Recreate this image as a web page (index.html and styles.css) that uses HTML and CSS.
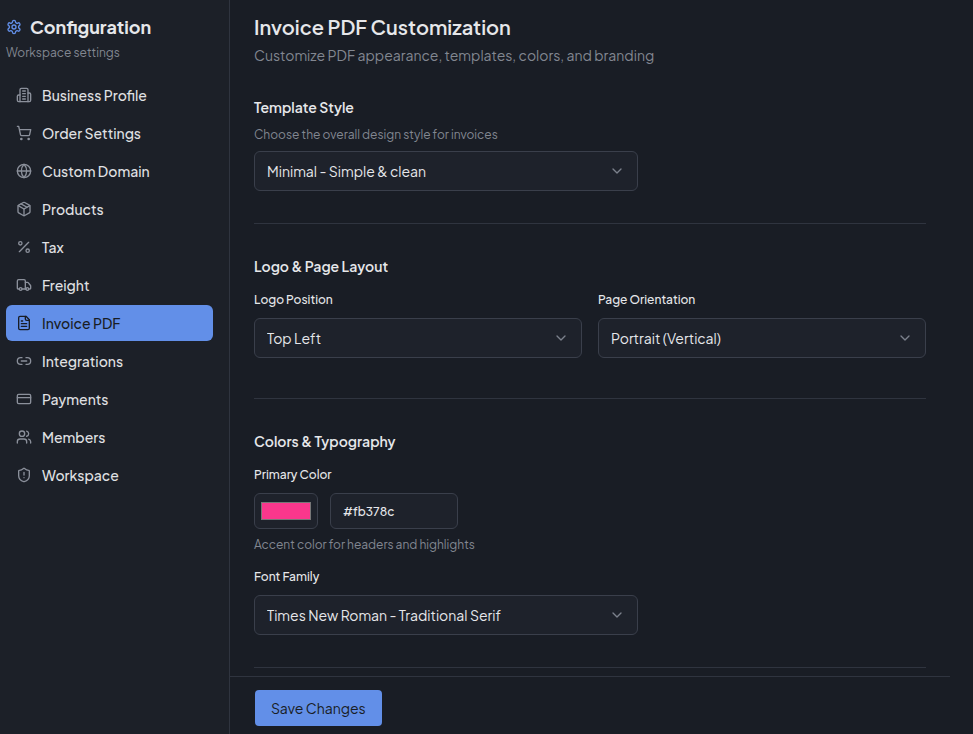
FILE: index.html
```html
<!DOCTYPE html>
<html lang="en">
<head>
    <meta charset="UTF-8">
    <meta name="viewport" content="width=device-width, initial-scale=1.0">
    <title>Invoice PDF Customization</title>
    <link rel="stylesheet" href="styles.css">
</head>
<body>
    <aside class="sidebar">
        <div class="sidebar-title">
            <svg class="icon" viewBox="0 0 24 24"><path d="M12.22 2h-.44a2 2 0 0 0-2 2v.18a2 2 0 0 1-1 1.73l-.43.25a2 2 0 0 1-2 0l-.15-.08a2 2 0 0 0-2.73.73l-.22.38a2 2 0 0 0 .73 2.73l.15.1a2 2 0 0 1 1 1.72v.51a2 2 0 0 1-1 1.74l-.15.09a2 2 0 0 0-.73 2.73l.22.38a2 2 0 0 0 2.73.73l.15-.08a2 2 0 0 1 2 0l.43.25a2 2 0 0 1 1 1.73V20a2 2 0 0 0 2 2h.44a2 2 0 0 0 2-2v-.18a2 2 0 0 1 1-1.73l.43-.25a2 2 0 0 1 2 0l.15.08a2 2 0 0 0 2.73-.73l.22-.39a2 2 0 0 0-.73-2.73l-.15-.08a2 2 0 0 1-1-1.74v-.5a2 2 0 0 1 1-1.74l.15-.09a2 2 0 0 0 .73-2.73l-.22-.38a2 2 0 0 0-2.73-.73l-.15.08a2 2 0 0 1-2 0l-.43-.25a2 2 0 0 1-1-1.73V4a2 2 0 0 0-2-2z"/><circle cx="12" cy="12" r="3"/></svg>
            <h2>Configuration</h2>
        </div>
        <p class="sidebar-subtitle">Workspace settings</p>
        <nav>
            <a href="#business">
                <svg class="icon" viewBox="0 0 24 24"><path d="M6 22V4a2 2 0 0 1 2-2h8a2 2 0 0 1 2 2v18Z"/><path d="M6 12H4a2 2 0 0 0-2 2v6a2 2 0 0 0 2 2h2"/><path d="M18 9h2a2 2 0 0 1 2 2v9a2 2 0 0 1-2 2h-2"/><path d="M10 6h4M10 10h4M10 14h4M10 18h4"/></svg>
                Business Profile
            </a>
            <a href="#orders">
                <svg class="icon" viewBox="0 0 24 24"><circle cx="8" cy="21" r="1"/><circle cx="19" cy="21" r="1"/><path d="M2.05 2.05h2l2.66 12.42a2 2 0 0 0 2 1.58h9.78a2 2 0 0 0 1.95-1.57l1.65-7.43H5.12"/></svg>
                Order Settings
            </a>
            <a href="#domain">
                <svg class="icon" viewBox="0 0 24 24"><circle cx="12" cy="12" r="10"/><path d="M12 2a14.5 14.5 0 0 0 0 20 14.5 14.5 0 0 0 0-20"/><path d="M2 12h20"/></svg>
                Custom Domain
            </a>
            <a href="#products">
                <svg class="icon" viewBox="0 0 24 24"><path d="M11 21.73a2 2 0 0 0 2 0l7-4A2 2 0 0 0 21 16V8a2 2 0 0 0-1-1.73l-7-4a2 2 0 0 0-2 0l-7 4A2 2 0 0 0 3 8v8a2 2 0 0 0 1 1.73z"/><path d="M12 22V12"/><path d="M3.3 7 12 12l8.7-5"/><path d="m7.5 4.27 9 5.15"/></svg>
                Products
            </a>
            <a href="#tax">
                <svg class="icon" viewBox="0 0 24 24"><path d="M19 5 5 19"/><circle cx="6.5" cy="6.5" r="2.5"/><circle cx="17.5" cy="17.5" r="2.5"/></svg>
                Tax
            </a>
            <a href="#freight">
                <svg class="icon" viewBox="0 0 24 24"><path d="M14 18V6a2 2 0 0 0-2-2H4a2 2 0 0 0-2 2v11a1 1 0 0 0 1 1h2"/><path d="M15 18H9"/><path d="M19 18h2a1 1 0 0 0 1-1v-3.65a1 1 0 0 0-.22-.62l-3.48-4.35A1 1 0 0 0 17.52 8H14"/><circle cx="17" cy="18" r="2"/><circle cx="7" cy="18" r="2"/></svg>
                Freight
            </a>
            <a href="#invoice" class="active">
                <svg class="icon" viewBox="0 0 24 24"><path d="M15 2H6a2 2 0 0 0-2 2v16a2 2 0 0 0 2 2h12a2 2 0 0 0 2-2V7Z"/><path d="M14 2v4a2 2 0 0 0 2 2h4"/><path d="M10 9H8M16 13H8M16 17H8"/></svg>
                Invoice PDF
            </a>
            <a href="#integrations">
                <svg class="icon" viewBox="0 0 24 24"><path d="M9 17H7A5 5 0 0 1 7 7h2"/><path d="M15 7h2a5 5 0 1 1 0 10h-2"/><path d="M8 12h8"/></svg>
                Integrations
            </a>
            <a href="#payments">
                <svg class="icon" viewBox="0 0 24 24"><rect x="2" y="5" width="20" height="14" rx="2"/><path d="M2 10h20"/></svg>
                Payments
            </a>
            <a href="#members">
                <svg class="icon" viewBox="0 0 24 24"><path d="M16 21v-2a4 4 0 0 0-4-4H6a4 4 0 0 0-4 4v2"/><circle cx="9" cy="7" r="4"/><path d="M22 21v-2a4 4 0 0 0-3-3.87"/><path d="M16 3.13a4 4 0 0 1 0 7.75"/></svg>
                Members
            </a>
            <a href="#workspace">
                <svg class="icon" viewBox="0 0 24 24"><path d="M20 13c0 5-3.5 7.5-7.66 8.95a1 1 0 0 1-.67-.01C7.5 20.5 4 18 4 13V6a1 1 0 0 1 1-1c2 0 4.5-1.2 6.24-2.72a1.17 1.17 0 0 1 1.52 0C14.51 3.81 17 5 19 5a1 1 0 0 1 1 1z"/><path d="M12 8v4M12 16h.01"/></svg>
                Workspace
            </a>
        </nav>
    </aside>

    <main>
        <form class="settings">
            <header>
                <h1>Invoice PDF Customization</h1>
                <p>Customize PDF appearance, templates, colors, and branding</p>
            </header>

            <section>
                <h3><label for="template">Template Style</label></h3>
                <p class="hint">Choose the overall design style for invoices</p>
                <div class="select narrow">
                    <select id="template">
                        <option>Minimal - Simple &amp; clean</option>
                    </select>
                    <svg class="icon" viewBox="0 0 24 24"><path d="m6 9 6 6 6-6"/></svg>
                </div>
            </section>

            <section class="layout">
                <h3>Logo &amp; Page Layout</h3>
                <div class="columns">
                    <div class="field">
                        <label for="logo_position">Logo Position</label>
                        <div class="select">
                            <select id="logo_position">
                                <option>Top Left</option>
                            </select>
                            <svg class="icon" viewBox="0 0 24 24"><path d="m6 9 6 6 6-6"/></svg>
                        </div>
                    </div>
                    <div class="field">
                        <label for="orientation">Page Orientation</label>
                        <div class="select">
                            <select id="orientation">
                                <option>Portrait (Vertical)</option>
                            </select>
                            <svg class="icon" viewBox="0 0 24 24"><path d="m6 9 6 6 6-6"/></svg>
                        </div>
                    </div>
                </div>
            </section>

            <section>
                <h3>Colors &amp; Typography</h3>
                <div class="field">
                    <label for="color_text">Primary Color</label>
                    <div class="color-row">
                        <input type="color" id="color_picker" aria-label="Pick primary color" value="#fb378c">
                        <input type="text" id="color_text" value="#fb378c">
                    </div>
                    <p class="hint">Accent color for headers and highlights</p>
                </div>
                <div class="field">
                    <label for="font_family">Font Family</label>
                    <div class="select narrow">
                        <select id="font_family">
                            <option>Times New Roman - Traditional Serif</option>
                        </select>
                        <svg class="icon" viewBox="0 0 24 24"><path d="m6 9 6 6 6-6"/></svg>
                    </div>
                </div>
            </section>
        </form>

        <footer>
            <button type="button">Save Changes</button>
        </footer>
    </main>
</body>
</html>
```

FILE: styles.css
```css
* {
    box-sizing: border-box;
}
body {
    display: flex;
    margin: 0;
    min-height: 100vh;
    font-family: "Plus Jakarta Sans", Inter, sans-serif;
    font-size: 14px;
    line-height: 20px;
    background-color: #191d25;
    color: #e6e7ea;
}
h1, h2, h3, p {
    margin: 0;
}
.icon {
    flex: none;
    width: 16px;
    height: 16px;
    fill: none;
    stroke: #8b909b;
    stroke-width: 2;
    stroke-linecap: round;
    stroke-linejoin: round;
}

/* Sidebar */
.sidebar {
    flex: none;
    width: 230px;
    padding: 13px 16px 13px 6px;
    background-color: #1c2028;
    border-right: 1px solid #2f343f;
}
.sidebar-title {
    display: flex;
    align-items: center;
    gap: 8px;
}
.sidebar-title .icon {
    stroke: #628fe8;
}
.sidebar-title h2 {
    font-size: 18px;
    line-height: 28px;
    font-weight: 700;
}
.sidebar-subtitle {
    margin-top: 2px;
    font-size: 12px;
    line-height: 20px;
    color: #828791;
}
nav {
    display: flex;
    flex-direction: column;
    gap: 2px;
    margin-top: 14px;
}
nav a {
    display: flex;
    align-items: center;
    gap: 10px;
    height: 36px;
    padding: 0 10px;
    border-radius: 6px;
    font-weight: 500;
    color: #e0e1e4;
    text-decoration: none;
}
nav a.active {
    background-color: #628fe8;
    color: #191d25;
}
nav a.active .icon {
    stroke: #191d25;
}

/* Settings form */
main {
    flex: 1;
    display: flex;
    flex-direction: column;
    max-width: 720px;
}
.settings {
    flex: 1;
    padding: 13px 24px 8px;
}
header {
    margin-bottom: 30px;
}
header h1 {
    font-size: 20px;
    line-height: 28px;
    font-weight: 600;
}
header p {
    line-height: 24px;
    margin-top: 2px;
    color: #828791;
}
section {
    padding-bottom: 32px;
    border-bottom: 1px solid #2f343f;
}
section.layout {
    padding-bottom: 40px;
}
section + section {
    padding-top: 32px;
}
h3 {
    padding-bottom: 2px;
    font-size: 14px;
    line-height: 20px;
    font-weight: 600;
}
.hint {
    margin: 6px 0;
    font-size: 12px;
    color: #828791;
}
.columns {
    display: grid;
    grid-template-columns: 1fr 1fr;
    gap: 16px;
}
.field {
    margin-top: 12px;
}
.field label {
    display: block;
    margin-bottom: 8px;
    font-size: 12px;
    font-weight: 500;
}
.select {
    position: relative;
}
.select.narrow {
    max-width: 384px;
}
.select .icon {
    position: absolute;
    top: 12px;
    right: 13px;
    stroke: #7c818c;
    pointer-events: none;
}
select, input {
    font-family: inherit;
    font-size: 14px;
    color: #e6e7ea;
    background-color: #1e222b;
    border: 1px solid #3a3f4b;
    border-radius: 6px;
}
select {
    display: block;
    width: 100%;
    height: 40px;
    padding: 0 12px;
    appearance: none;
}
.color-row {
    display: flex;
    gap: 12px;
}
input[type="color"] {
    width: 64px;
    height: 36px;
    padding: 4px;
}
input[type="text"] {
    width: 128px;
    height: 36px;
    padding: 0 12px;
    font-size: 12px;
    font-weight: 500;
}

footer {
    padding: 13px 25px 8px;
    border-top: 1px solid #2f343f;
}
button {
    height: 36px;
    padding: 0 16px;
    font-family: inherit;
    font-size: 14px;
    color: #191d25;
    background-color: #628fe8;
    border: none;
    border-radius: 4px;
    cursor: pointer;
}
```
